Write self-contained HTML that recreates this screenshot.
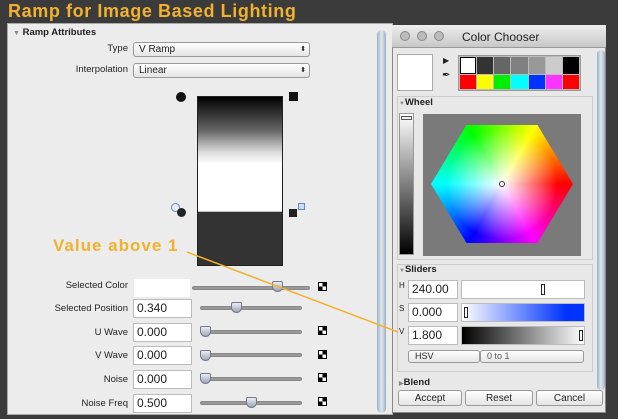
<!DOCTYPE html><html><head><style>
*{margin:0;padding:0;box-sizing:border-box}
body{width:618px;height:419px;background:#3b3b3b;position:relative;overflow:hidden;font-family:"Liberation Sans",sans-serif;font-size:10px;color:#222}
.a{position:absolute}
.lbl{position:absolute;text-align:right;font-size:9.5px;color:#222}
.inp{position:absolute;background:#fff;border:1px solid #bbb;font-size:12px;padding-left:3px;line-height:16px}
.trk{position:absolute;height:4px;background:#999;border-radius:2px;border:1px solid #888}
.th{position:absolute;width:11px;height:11px;background:linear-gradient(#e8eef4,#9aa8b6);border:1px solid #778;border-radius:2px 2px 6px 6px}
.chk{position:absolute;width:9px;height:9px;background:conic-gradient(#000 0 25%,#fff 0 50%,#000 0 75%,#fff 0);border:1px solid #000}
.btn{position:absolute;background:linear-gradient(#fff,#e4e4e4);border:1px solid #999;border-radius:3px;text-align:center;font-size:10px;line-height:15px}
</style></head><body>
<div class="a" style="left:8px;top:1px;font-size:18px;font-weight:bold;color:#f2b12e;letter-spacing:0.6px">Ramp for Image Based Lighting</div>
<div class="a" style="left:7px;top:23px;width:386px;height:392px;background:#ececec;border:1px solid #aaa"></div>
<div class="a" style="left:377px;top:30px;width:9px;height:383px;background:linear-gradient(90deg,#9fb0c0,#dfe8f0,#9fb0c0);border-radius:5px"></div>
<div class="a" style="left:13px;top:27px;font-size:9.5px;font-weight:bold"><span style="color:#888;font-size:7px">▼</span> Ramp Attributes</div>
<div class="lbl" style="left:60px;width:68px;top:43px">Type</div>
<div class="btn" style="left:133px;top:42px;width:177px;height:15px;text-align:left;padding-left:5px;line-height:13px">V Ramp<span style="position:absolute;right:3px;font-size:7px">⬍</span></div>
<div class="lbl" style="left:40px;width:88px;top:64px">Interpolation</div>
<div class="btn" style="left:133px;top:63px;width:177px;height:15px;text-align:left;padding-left:5px;line-height:13px">Linear<span style="position:absolute;right:3px;font-size:7px">⬍</span></div>
<div class="a" style="left:197px;top:96px;width:86px;height:170px;border:1px solid #222;background:linear-gradient(#000 0%,#666 20%,#ddd 33%,#fff 40%,#fff 68%,#333 68.5%,#333 100%)"></div>
<div class="a" style="left:176px;top:92px;width:10px;height:10px;border-radius:50%;background:#111"></div>
<div class="a" style="left:289px;top:92px;width:9px;height:9px;background:#111"></div>
<div class="a" style="left:171px;top:203px;width:9px;height:9px;border-radius:50%;border:1.5px solid #5a8ad0"></div>
<div class="a" style="left:177px;top:208px;width:9px;height:9px;border-radius:50%;background:#222"></div>
<div class="a" style="left:289px;top:209px;width:8px;height:8px;background:#222"></div>
<div class="a" style="left:298px;top:203px;width:7px;height:7px;border:1px solid #5a8ad0;background:#cde"></div>
<div class="a" style="left:53px;top:236px;font-size:17px;font-weight:bold;color:#f2b12e;letter-spacing:1px">Value above 1</div>
<div class="lbl" style="left:40px;width:88px;top:280px">Selected Color</div>
<div class="a" style="left:134px;top:279px;width:56px;height:18px;background:#fff"></div>
<div class="trk" style="left:192px;top:286px;width:118px"></div><div class="th" style="left:272px;top:281px"></div>
<div class="chk" style="left:318px;top:282px"></div>
<div class="lbl" style="left:20px;width:108px;top:303px">Selected Position</div>
<div class="inp" style="left:133px;top:299px;width:59px;height:19px">0.340</div>
<div class="trk" style="left:200px;top:306px;width:102px"></div><div class="th" style="left:231px;top:302px"></div>
<div class="lbl" style="left:40px;width:88px;top:327px">U Wave</div>
<div class="inp" style="left:133px;top:323px;width:59px;height:19px">0.000</div>
<div class="trk" style="left:200px;top:330px;width:102px"></div><div class="th" style="left:200px;top:326px"></div><div class="chk" style="left:318px;top:326px"></div>
<div class="lbl" style="left:40px;width:88px;top:350px">V Wave</div>
<div class="inp" style="left:133px;top:346px;width:59px;height:19px">0.000</div>
<div class="trk" style="left:200px;top:353px;width:102px"></div><div class="th" style="left:200px;top:350px"></div><div class="chk" style="left:318px;top:350px"></div>
<div class="lbl" style="left:40px;width:88px;top:374px">Noise</div>
<div class="inp" style="left:133px;top:370px;width:59px;height:19px">0.000</div>
<div class="trk" style="left:200px;top:377px;width:102px"></div><div class="th" style="left:200px;top:373px"></div><div class="chk" style="left:318px;top:373px"></div>
<div class="lbl" style="left:40px;width:88px;top:398px">Noise Freq</div>
<div class="inp" style="left:133px;top:394px;width:59px;height:19px">0.500</div>
<div class="trk" style="left:200px;top:401px;width:102px"></div><div class="th" style="left:246px;top:397px"></div><div class="chk" style="left:318px;top:397px"></div>

<div class="a" style="left:392px;top:25px;width:214px;height:388px;background:#e8e8e8;border:1px solid #888"></div>
<div class="a" style="left:392px;top:25px;width:214px;height:23px;background:linear-gradient(#eee,#c8c8c8);border-bottom:1px solid #999"></div>
<div class="a" style="left:400px;top:31px;width:10px;height:10px;border-radius:50%;background:#bbb;border:1px solid #888"></div>
<div class="a" style="left:417px;top:31px;width:10px;height:10px;border-radius:50%;background:#bbb;border:1px solid #888"></div>
<div class="a" style="left:434px;top:31px;width:10px;height:10px;border-radius:50%;background:#bbb;border:1px solid #888"></div>
<div class="a" style="left:462px;top:30px;font-size:12px">Color Chooser</div>
<div class="a" style="left:597px;top:50px;width:8px;height:340px;background:linear-gradient(90deg,#9fb0c0,#dfe8f0,#9fb0c0);border-radius:4px"></div>
<div class="a" style="left:397px;top:54px;width:36px;height:37px;background:#fff;border:1px solid #aaa"></div>
<div class="a" style="left:443px;top:56px;font-size:8px">▶</div>
<div class="a" style="left:442px;top:70px;font-size:10px">✒</div>
<div class="a" style="left:458px;top:55px;width:123px;height:36px;background:#bbb;border:1px solid #999;display:grid;grid-template-columns:repeat(7,1fr);gap:1px;padding:1px">
<div style="background:#fff;border:1px solid #000"></div><div style="background:#333"></div><div style="background:#666"></div><div style="background:#808080"></div><div style="background:#999"></div><div style="background:#ccc"></div><div style="background:#000"></div>
<div style="background:#f00"></div><div style="background:#ff0"></div><div style="background:#0e0"></div><div style="background:#0ff"></div><div style="background:#03f"></div><div style="background:#f3f"></div><div style="background:#f00"></div></div>
<div class="a" style="left:397px;top:96px;width:196px;height:164px;border:1px solid #ccc"></div>
<div class="a" style="left:399px;top:97px;font-size:9.5px;font-weight:bold"><span style="color:#888;font-size:6px">▼</span>Wheel</div>
<div class="a" style="left:399px;top:113px;width:15px;height:142px;background:linear-gradient(#fff,#000);border:1px solid #999"></div>
<div class="a" style="left:401px;top:116px;width:11px;height:4px;background:#eee;border:1px solid #555"></div>
<div class="a" style="left:423px;top:114px;width:158px;height:142px;background:#7a7a7a;overflow:hidden">
<div style="position:absolute;left:8px;top:11px;width:142px;height:118px;clip-path:polygon(25% 0,75% 0,100% 50%,75% 100%,25% 100%,0 50%);background:radial-gradient(circle at 50% 50%,#fff 0%,rgba(255,255,255,0) 60%),conic-gradient(from 90deg,#f00,#f0f,#00f,#0ff,#0f0,#ff0,#f00)"></div>
<div style="position:absolute;left:76px;top:67px;width:6px;height:6px;border-radius:50%;border:1px solid #333"></div></div>
<div class="a" style="left:397px;top:264px;width:196px;height:108px;border:1px solid #ccc"></div>
<div class="a" style="left:399px;top:264px;font-size:9.5px;font-weight:bold"><span style="color:#888;font-size:6px">▼</span>Sliders</div>
<div class="a" style="left:399px;top:281px;font-size:8px">H</div><div class="a" style="left:399px;top:304px;font-size:8px">S</div><div class="a" style="left:399px;top:327px;font-size:8px">V</div>
<div class="inp" style="left:408px;top:280px;width:50px;height:19px;font-size:12px">240.00</div>
<div class="a" style="left:461px;top:280px;width:124px;height:19px;background:#fff;border:1px solid #bbb"></div>
<div class="a" style="left:541px;top:284px;width:4px;height:11px;border:1px solid #222;background:#fff"></div>
<div class="inp" style="left:408px;top:303px;width:50px;height:19px">0.000</div>
<div class="a" style="left:461px;top:303px;width:124px;height:19px;background:linear-gradient(90deg,#fff,#03f 85%);border:1px solid #bbb"></div>
<div class="a" style="left:464px;top:307px;width:4px;height:11px;border:1px solid #222;background:#fff"></div>
<div class="inp" style="left:408px;top:326px;width:50px;height:19px">1.800</div>
<div class="a" style="left:461px;top:326px;width:124px;height:19px;background:linear-gradient(90deg,#000,#fff);border:1px solid #bbb"></div>
<div class="a" style="left:579px;top:330px;width:4px;height:11px;border:1px solid #222;background:#fff"></div>
<div class="btn" style="left:408px;top:350px;width:72px;height:13px;text-align:left;padding-left:6px;line-height:11px;font-size:9px">HSV</div>
<div class="btn" style="left:480px;top:350px;width:104px;height:13px;text-align:left;padding-left:6px;line-height:11px;font-size:9px;color:#555">0 to 1</div>
<div class="a" style="left:399px;top:377px;font-size:9.5px;font-weight:bold"><span style="color:#888;font-size:6px">▶</span>Blend</div>
<div class="btn" style="left:398px;top:390px;width:64px;height:16px">Accept</div>
<div class="btn" style="left:465px;top:390px;width:68px;height:16px">Reset</div>
<div class="btn" style="left:536px;top:390px;width:67px;height:16px">Cancel</div>
<svg class="a" style="left:0;top:0" width="618" height="419"><line x1="187" y1="252" x2="398" y2="332" stroke="#f2b12e" stroke-width="1.5"/></svg>
</body></html>
